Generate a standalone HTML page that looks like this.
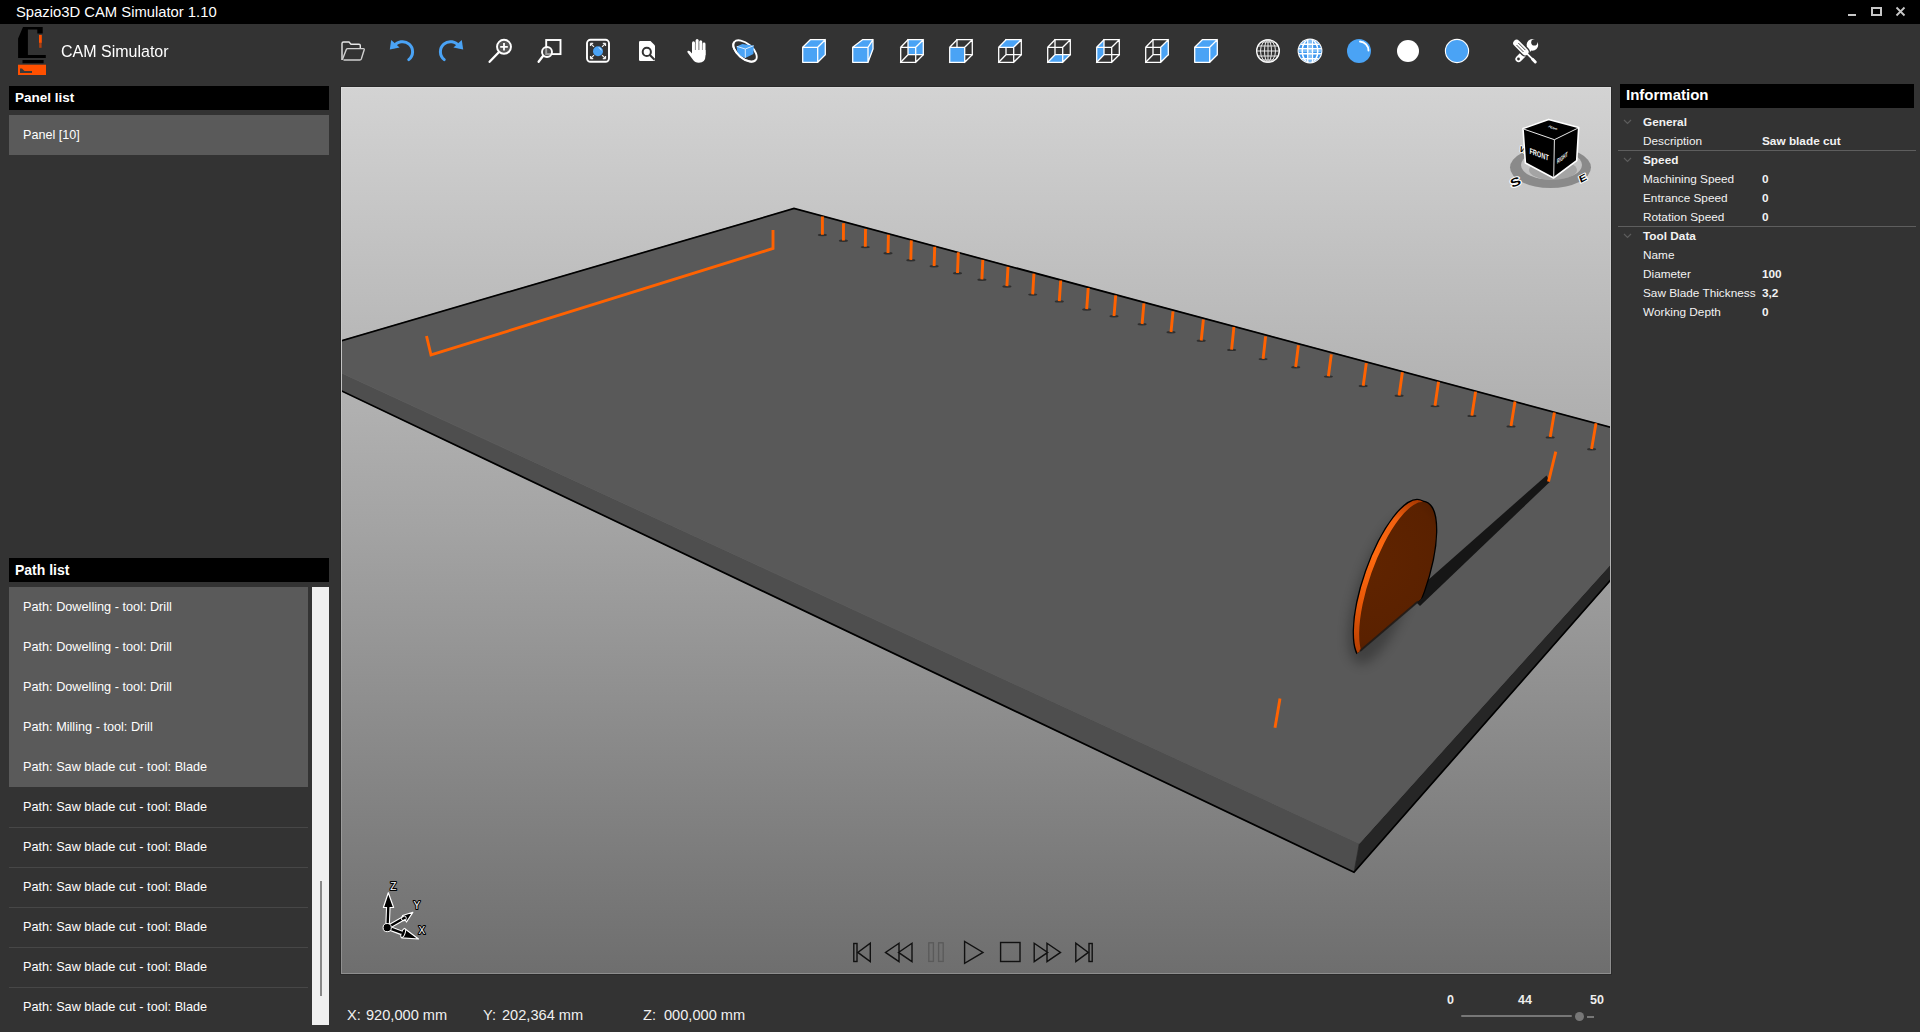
<!DOCTYPE html>
<html><head><meta charset="utf-8">
<style>
html,body{margin:0;padding:0;width:1920px;height:1032px;overflow:hidden;background:#333;font-family:"Liberation Sans",sans-serif;color:#fff}
.a{position:absolute}
#title{left:0;top:0;width:1920px;height:24px;background:#000}
#title .t{left:16px;top:3px;font-size:14.8px;line-height:18px;color:#fff;white-space:nowrap}
.hdr{background:#000;color:#fff;font-weight:bold;white-space:nowrap}
.item{background:#5a5a5a;font-size:12.6px;white-space:nowrap}
.pl{left:9px;width:299px;height:40px;font-size:12.7px;line-height:40px;white-space:nowrap;color:#fff}
.pl span{position:absolute;left:14px;top:0}
.sel{background:#5a5a5a}
.sep{border-top:1px solid #474747}
.info{font-size:11.8px;white-space:nowrap;color:#f2f2f2}
.info b{font-weight:bold}
.st{font-size:14.6px;white-space:nowrap;color:#f0f0f0}
</style></head><body>
<div id="title" class="a"><div class="t a">Spazio3D CAM Simulator 1.10</div>
</div>

<!-- logo -->
<svg class="a" style="left:0;top:24px" width="60" height="60" viewBox="0 24 60 60">
<polygon fill="#000" points="18.1,38.4 23,27 42.7,27 42.7,33.5 37.3,33.5 37.3,29.6 27.9,29.6 27.9,54.9 45.8,54.9 45.8,58 18.1,58"/>
<rect x="22.5" y="60" width="21.1" height="3.2" fill="#000"/>
<rect x="18" y="64.7" width="28" height="10.3" fill="#ff5000"/>
<rect x="39" y="34.9" width="2.8" height="8" fill="#ff5000"/>
<rect x="39.2" y="42.9" width="2.4" height="4.9" fill="#b04010"/>
<path d="M20 68.5 L22 68.5 L24.5 71 L32 71 L32 73 L20 73 Z" fill="#3a3a3a"/>
</svg>
<div class="a" style="left:61px;top:42px;font-size:16px;line-height:20px;color:#fff;white-space:nowrap;transform:scaleY(1.06);transform-origin:0 16px">CAM Simulator</div>


<!-- window controls -->
<svg class="a" style="left:1840px;top:0" width="80" height="24" viewBox="1840 0 80 24">
<rect x="1848" y="14" width="8" height="2" fill="#c8c8c8"/>
<rect x="1872" y="8" width="9" height="7" fill="none" stroke="#c8c8c8" stroke-width="2"/>
<path d="M1896.5 7.5L1904.5 15.5M1904.5 7.5L1896.5 15.5" stroke="#c8c8c8" stroke-width="1.8"/>
</svg>

<!-- toolbar -->
<svg class="a" style="left:330px;top:30px" width="1230" height="42" viewBox="330 30 1230 42">
<defs>
<radialGradient id="sph" cx="0.4" cy="0.4" r="0.6"><stop offset="0" stop-color="#5ab0ff"/><stop offset="1" stop-color="#3d95ea"/></radialGradient>
</defs>
<!-- folder -->
<path d="M342 60V43.5Q342 42 343.5 42H349L351 44.2H359Q360.3 44.2 360.3 45.5V48.5" fill="none" stroke="#e6e6e6" stroke-width="1.4"/>
<path d="M342.3 59.8L346.3 49.5Q346.7 48.6 347.7 48.6H363.3Q364.5 48.6 364.2 49.7L361.3 59Q360.9 60 359.8 60H343.5" fill="none" stroke="#d0d0d0" stroke-width="1.4"/>
<!-- undo -->
<path d="M393.94 46.70A10 10 0 1 1 408.76 59.58" fill="none" stroke="#4aa3f5" stroke-width="3" stroke-linecap="round"/>
<polygon points="389.8,49.4 391.2,40 399.6,47.4" fill="#4aa3f5"/>
<!-- redo -->
<path d="M459.06 46.70A10 10 0 1 0 444.24 59.58" fill="none" stroke="#4aa3f5" stroke-width="3" stroke-linecap="round"/>
<polygon points="463.2,49.4 461.8,40 453.4,47.4" fill="#4aa3f5"/>
<!-- zoom in -->
<circle cx="504" cy="46.8" r="7" fill="#555" stroke="#fff" stroke-width="1.9"/>
<path d="M504 43V50.6M500.2 46.8H507.8" stroke="#fff" stroke-width="1.8"/>
<path d="M498.8 52.2L489.6 61.8" stroke="#fff" stroke-width="2.3" stroke-linecap="round"/>
<!-- zoom window -->
<rect x="546.2" y="40" width="14.3" height="14.1" fill="none" stroke="#fff" stroke-width="1.9"/>
<circle cx="547" cy="52" r="5" fill="rgba(90,90,90,0.6)" stroke="#fff" stroke-width="1.9"/>
<path d="M543.2 55.8L538.6 61.8" stroke="#fff" stroke-width="2.3" stroke-linecap="round"/>
<!-- fit all -->
<rect x="587" y="39.8" width="22" height="22" rx="3.5" fill="none" stroke="#fff" stroke-width="1.9"/>
<circle cx="598" cy="51.2" r="5" fill="#4aa3f5"/>
<path d="M598.6 47.6A3.5 3.5 0 0 1 601.3 50.3" fill="none" stroke="#fff" stroke-width="0.8"/>
<path d="M590.5 43.3L594 46.8M590.5 43.3V46M590.5 43.3H593.2 M605.5 43.3L602 46.8M605.5 43.3V46M605.5 43.3H602.8 M590.5 58.7L594 55.2M590.5 58.7V56M590.5 58.7H593.2 M605.5 58.7L602 55.2M605.5 58.7V56M605.5 58.7H602.8" fill="none" stroke="#eee" stroke-width="1.2"/>
<!-- zoom object -->
<path d="M639 42.2Q639 41 640.2 41H650.5L655 45.5V59.8Q655 61 653.8 61H640.2Q639 61 639 59.8Z" fill="#fff"/>
<circle cx="646.8" cy="51.9" r="4.1" fill="none" stroke="#333" stroke-width="2"/>
<path d="M649.6 54.8L654.6 59.8" stroke="#333" stroke-width="2"/>
<!-- hand -->
<g fill="#fff">
<rect x="692" y="41.2" width="3" height="14" rx="1.5"/>
<rect x="695.6" y="39" width="3" height="14" rx="1.5"/>
<rect x="699.2" y="40.2" width="3" height="14" rx="1.5"/>
<rect x="702.6" y="42.6" width="2.9" height="13" rx="1.45"/>
<path d="M692 50H705.5V55.5Q705.5 62.8 698.8 62.8Q695 62.8 692.8 59.5L687.6 52.6Q686.8 51.2 688 50.8Q689.2 50.5 690.2 51.6L692 53.5Z"/>
</g>
<path d="M695.3 44V50M698.9 43V50M702.4 45V50" stroke="#a8a8a8" stroke-width="0.7"/>
<!-- orbit -->
<ellipse cx="745" cy="51" rx="14" ry="7.5" transform="rotate(40 745 51)" fill="none" stroke="#fff" stroke-width="1.9"/>
<polygon points="736.6,46.4 742.4,43.9 753.7,45.7 753.4,54 745.3,58 737.7,54.8" fill="#4aa3f5"/>
<path d="M736.8 46.4L745.3 49L753.6 45.7M745.3 49V57.8" fill="none" stroke="#d8ecff" stroke-width="1"/>
<path d="M755.72 60.00A14 7.5 40 0 1 734.28 42.00" fill="none" stroke="#fff" stroke-width="1.9"/>
<g transform="translate(802 39)"><polygon points="0.7,8.3 8.3,0.7 23.3,0.7 23.3,15.7 15.7,23.3 0.7,23.3" fill="#4aa3f5"/><path d="M0.7 8.3L8.3 0.7H23.3V15.7L15.7 23.3H0.7ZM0.7 8.3H15.7V23.3M15.7 8.3L23.3 0.7" fill="none" stroke="#fff" stroke-width="1.3" stroke-linejoin="round" stroke-linecap="square"/></g>
<g transform="translate(852 39)"><polygon points="0.7,8.3 10.5,0.7 21,0.7 21.2,10 16.3,23.3 0.7,23.3" fill="#4aa3f5"/><path d="M0.7 8.3L10.5 0.7H21V10L16 23.3H0.7ZM0.7 8.3H16V23.3M16 8.3L21 0.7" fill="none" stroke="#fff" stroke-width="1.3" stroke-linejoin="round" stroke-linecap="square"/></g>
<g transform="translate(900 39)"><polygon points="8,0.7 23.3,0.7 23.3,15.7 8,15.7" fill="#4aa3f5"/><path d="M8 0.7V15.7H23.3M0.7 23.3L8 15.7" fill="none" stroke="#fff" stroke-width="1.3" stroke-linejoin="round" stroke-linecap="square"/><path d="M0.7 8.3H15.7V23.3H0.7ZM8 0.7H23.3V15.7M0.7 8.3L8 0.7M15.7 8.3L23.3 0.7M15.7 23.3L23.3 15.7" fill="none" stroke="#fff" stroke-width="1.3" stroke-linejoin="round" stroke-linecap="square"/></g>
<g transform="translate(949 39)"><path d="M8 0.7V15.7H23.3M0.7 23.3L8 15.7" fill="none" stroke="#fff" stroke-width="1.3" stroke-linejoin="round" stroke-linecap="square"/><polygon points="0.7,8.3 15.7,8.3 15.7,23.3 0.7,23.3" fill="#4aa3f5"/><path d="M0.7 8.3H15.7V23.3H0.7ZM8 0.7H23.3V15.7M0.7 8.3L8 0.7M15.7 8.3L23.3 0.7M15.7 23.3L23.3 15.7" fill="none" stroke="#fff" stroke-width="1.3" stroke-linejoin="round" stroke-linecap="square"/></g>
<g transform="translate(998 39)"><path d="M8 0.7V15.7H23.3M0.7 23.3L8 15.7" fill="none" stroke="#fff" stroke-width="1.3" stroke-linejoin="round" stroke-linecap="square"/><polygon points="0.7,8.3 8,0.7 23.3,0.7 15.7,8.3" fill="#4aa3f5"/><path d="M0.7 8.3H15.7V23.3H0.7ZM8 0.7H23.3V15.7M0.7 8.3L8 0.7M15.7 8.3L23.3 0.7M15.7 23.3L23.3 15.7" fill="none" stroke="#fff" stroke-width="1.3" stroke-linejoin="round" stroke-linecap="square"/></g>
<g transform="translate(1047 39)"><polygon points="0.7,23.3 8,15.7 23.3,15.7 15.7,23.3" fill="#4aa3f5"/><path d="M8 0.7V15.7H23.3M0.7 23.3L8 15.7" fill="none" stroke="#fff" stroke-width="1.3" stroke-linejoin="round" stroke-linecap="square"/><path d="M0.7 8.3H15.7V23.3H0.7ZM8 0.7H23.3V15.7M0.7 8.3L8 0.7M15.7 8.3L23.3 0.7M15.7 23.3L23.3 15.7" fill="none" stroke="#fff" stroke-width="1.3" stroke-linejoin="round" stroke-linecap="square"/></g>
<g transform="translate(1096 39)"><polygon points="0.7,8.3 8,0.7 8,15.7 0.7,23.3" fill="#4aa3f5"/><path d="M8 0.7V15.7H23.3M0.7 23.3L8 15.7" fill="none" stroke="#fff" stroke-width="1.3" stroke-linejoin="round" stroke-linecap="square"/><path d="M0.7 8.3H15.7V23.3H0.7ZM8 0.7H23.3V15.7M0.7 8.3L8 0.7M15.7 8.3L23.3 0.7M15.7 23.3L23.3 15.7" fill="none" stroke="#fff" stroke-width="1.3" stroke-linejoin="round" stroke-linecap="square"/></g>
<g transform="translate(1145 39)"><path d="M8 0.7V15.7H23.3M0.7 23.3L8 15.7" fill="none" stroke="#fff" stroke-width="1.3" stroke-linejoin="round" stroke-linecap="square"/><polygon points="15.7,8.3 23.3,0.7 23.3,15.7 15.7,23.3" fill="#4aa3f5"/><path d="M0.7 8.3H15.7V23.3H0.7ZM8 0.7H23.3V15.7M0.7 8.3L8 0.7M15.7 8.3L23.3 0.7M15.7 23.3L23.3 15.7" fill="none" stroke="#fff" stroke-width="1.3" stroke-linejoin="round" stroke-linecap="square"/></g>
<g transform="translate(1194 39)"><polygon points="0.7,8.3 8.3,0.7 23.3,0.7 23.3,15.7 15.7,23.3 0.7,23.3" fill="#4aa3f5"/><path d="M0.7 8.3L8.3 0.7H23.3V15.7L15.7 23.3H0.7ZM0.7 8.3H15.7V23.3M15.7 8.3L23.3 0.7" fill="none" stroke="#fff" stroke-width="1.3" stroke-linejoin="round" stroke-linecap="square"/></g>
<!-- globe wire -->
<g transform="translate(1268 51)">
<circle r="11.3" fill="none" stroke="#fff" stroke-width="1.4"/>
<ellipse rx="7.5" ry="11.3" fill="none" stroke="#e8e8e8" stroke-width="1"/>
<ellipse rx="3.5" ry="11.3" fill="none" stroke="#e8e8e8" stroke-width="1"/>
<path d="M0 -11.3V11.3M-11.3 0H11.3M-10.2 -5H10.2M-10.2 5H10.2M-7 -9H7M-7 9H7" stroke="#e8e8e8" stroke-width="1"/>
</g>
<!-- globe blue -->
<g transform="translate(1310 51)">
<circle r="12.4" fill="#fff"/>
<clipPath id="gc"><circle r="11.3"/></clipPath>
<g clip-path="url(#gc)">
<rect x="-12" y="-12" width="24" height="24" fill="#3d96ee"/>
<path d="M-12 0H12M0 -12V12" stroke="#7fbff7" stroke-width="2.2"/>
<path d="M-12 -6.8H12M-12 -2.2H12M-12 2.8H12M-12 7.8H12" stroke="#fff" stroke-width="1.5"/>
<ellipse rx="7.8" ry="12" fill="none" stroke="#fff" stroke-width="1.5"/>
<path d="M-2.2 -12V12M2.4 -12V12" stroke="#fff" stroke-width="1.5"/>
</g>
</g>
<!-- blue sphere -->
<circle cx="1359" cy="51" r="12" fill="#4aa3f5"/>
<path d="M1360 41.5A9 9 0 0 1 1368.5 50.5" fill="none" stroke="#fff" stroke-width="1.9" stroke-linecap="round"/>
<!-- white circle -->
<circle cx="1408" cy="51" r="11" fill="#fff"/>
<!-- blue circle -->
<circle cx="1457" cy="51" r="11.6" fill="#4aa3f5" stroke="#fff" stroke-width="1.1"/>
<!-- tools -->
<mask id="wm"><rect x="1500" y="30" width="60" height="40" fill="#fff"/><circle cx="1534.3" cy="42.4" r="3.1" fill="#000"/><polygon points="1534.3,39.3 1540,34 1542,40 1537.4,42.6" fill="#000"/></mask>
<g mask="url(#wm)">
<circle cx="1532.4" cy="44.9" r="5.8" fill="#fff"/>
</g>
<path d="M1528 49.5L1518.6 58.9" stroke="#fff" stroke-width="6.4" stroke-linecap="round"/>
<circle cx="1518.5" cy="59" r="1.4" fill="#333"/>
<path d="M1516.6 43.2L1525.2 51.8" stroke="#333" stroke-width="9.6" stroke-linecap="round"/>
<path d="M1516.6 43.2L1525.2 51.8" stroke="#fff" stroke-width="6.8" stroke-linecap="round"/>
<path d="M1518.3 43L1525.4 50.1M1516.5 45L1523.5 52" stroke="#333" stroke-width="0.9"/>
<path d="M1526.5 53.2L1533 59.7" stroke="#fff" stroke-width="1.7"/>
<path d="M1532.6 59.3L1535.3 62" stroke="#fff" stroke-width="2.9" stroke-linecap="round"/>
</svg>

<!-- Panel list -->
<div class="a hdr" style="left:9px;top:86px;width:320px;height:24px;font-size:13.5px;line-height:24px"><span class="a" style="left:6px;top:0">Panel list</span></div>
<div class="a item" style="left:9px;top:115px;width:320px;height:40px;line-height:40px"><span class="a" style="left:14px;top:0">Panel [10]</span></div>

<!-- Path list -->
<div class="a hdr" style="left:9px;top:558px;width:320px;height:24px;font-size:14px;line-height:24px"><span class="a" style="left:6px;top:0">Path list</span></div>
<div class="a pl sel" style="top:587px"><span>Path: Dowelling - tool: Drill</span></div>
<div class="a pl sel" style="top:627px"><span>Path: Dowelling - tool: Drill</span></div>
<div class="a pl sel" style="top:667px"><span>Path: Dowelling - tool: Drill</span></div>
<div class="a pl sel" style="top:707px"><span>Path: Milling - tool: Drill</span></div>
<div class="a pl sel" style="top:747px"><span>Path: Saw blade cut - tool: Blade</span></div>
<div class="a pl" style="top:787px"><span>Path: Saw blade cut - tool: Blade</span></div>
<div class="a pl sep" style="top:827px;height:39px"><span style="top:-1px">Path: Saw blade cut - tool: Blade</span></div>
<div class="a pl sep" style="top:867px;height:39px"><span style="top:-1px">Path: Saw blade cut - tool: Blade</span></div>
<div class="a pl sep" style="top:907px;height:39px"><span style="top:-1px">Path: Saw blade cut - tool: Blade</span></div>
<div class="a pl sep" style="top:947px;height:39px"><span style="top:-1px">Path: Saw blade cut - tool: Blade</span></div>
<div class="a pl sep" style="top:987px;height:38px"><span style="top:-1px">Path: Saw blade cut - tool: Blade</span></div>
<div class="a" style="left:312px;top:587px;width:17px;height:438px;background:#f0f0f0"></div>
<div class="a" style="left:320px;top:881px;width:2px;height:115px;background:#888"></div>

<!-- Info panel -->
<div class="a hdr" style="left:1620px;top:84px;width:294px;height:24px;font-size:15px;line-height:22px"><span class="a" style="left:6px;top:0">Information</span></div>


<!-- viewport -->
<div class="a" style="left:340px;top:86px;width:1272px;height:889px;background:#2a2a2a"></div>
<div class="a" style="left:341px;top:87px;width:1270px;height:887px;background:linear-gradient(#dcdcdc,#8e8e8e)"></div>
<svg class="a" style="left:0;top:0" width="1920" height="1032" viewBox="0 0 1920 1032">
<defs>
<clipPath id="vp"><rect x="342" y="88" width="1268" height="885"/></clipPath>
<linearGradient id="bg" x1="0" y1="87" x2="0" y2="974" gradientUnits="userSpaceOnUse">
<stop offset="0" stop-color="#d3d3d3"/><stop offset="0.5" stop-color="#a3a3a3"/><stop offset="1" stop-color="#6e6e6e"/>
</linearGradient>
<radialGradient id="blade" cx="1405" cy="545" r="110" gradientUnits="userSpaceOnUse">
<stop offset="0" stop-color="#602400"/><stop offset="0.7" stop-color="#5a2100"/><stop offset="1" stop-color="#461800"/>
</radialGradient>
<linearGradient id="rim" x1="1307.8" y1="580.4" x2="1477.0" y2="580.4" gradientUnits="userSpaceOnUse"><stop offset="0" stop-color="#b03c00"/><stop offset="0.3" stop-color="#e85808"/><stop offset="0.6" stop-color="#ff6a10"/><stop offset="0.85" stop-color="#f06010"/><stop offset="1" stop-color="#a83800"/></linearGradient>
<clipPath id="cutc"><polygon points="1300,380 1520,380 1520,514.4 1300,702.2"/></clipPath>
<filter id="blur2" x="-50%" y="-50%" width="200%" height="200%"><feGaussianBlur stdDeviation="6"/></filter>
</defs>
<g clip-path="url(#vp)">
<rect x="342" y="88" width="1268" height="885" fill="url(#bg)"/>
<polygon points="298.7,353.2 1359.3,843.4 1354,872.2 290,366.4" fill="#4e4e4e" stroke="#4e4e4e" stroke-width="0.6"/>
<polygon points="1359.3,843.4 1710,454 1700,478.4 1354,872.2" fill="#262626" stroke="#262626" stroke-width="0.6"/>
<polygon points="298.7,353.2 794,208.5 1710,454 1359.3,843.4" fill="#595959" stroke="#595959" stroke-width="0.8"/>
<polyline points="298.7,353.2 794,208.5 1710,454" fill="none" stroke="#000" stroke-width="1.7"/>
<polyline points="290,366.4 1354,872.2 1700,478.4" fill="none" stroke="#000" stroke-width="1.7"/>
<g fill="#1e1e1e" opacity="0.7"><ellipse cx="822.4" cy="235.0" rx="4.6" ry="1.2" /><ellipse cx="843.4" cy="240.7" rx="4.6" ry="1.2" /><ellipse cx="865.3" cy="247.1" rx="4.6" ry="1.2" /><ellipse cx="888.0" cy="253.3" rx="4.6" ry="1.2" /><ellipse cx="910.8" cy="260.2" rx="4.6" ry="1.2" /><ellipse cx="934.1" cy="266.3" rx="4.6" ry="1.2" /><ellipse cx="957.5" cy="273.3" rx="4.6" ry="1.2" /><ellipse cx="981.9" cy="279.7" rx="4.6" ry="1.2" /><ellipse cx="1006.9" cy="286.5" rx="4.6" ry="1.2" /><ellipse cx="1032.7" cy="294.6" rx="4.6" ry="1.2" /><ellipse cx="1059.3" cy="301.4" rx="4.6" ry="1.2" /><ellipse cx="1086.7" cy="309.5" rx="4.6" ry="1.2" /><ellipse cx="1114.0" cy="316.3" rx="4.6" ry="1.2" /><ellipse cx="1142.1" cy="324.3" rx="4.6" ry="1.2" /><ellipse cx="1171.0" cy="332.3" rx="4.6" ry="1.2" /><ellipse cx="1201.2" cy="340.8" rx="4.6" ry="1.2" /><ellipse cx="1231.6" cy="349.9" rx="4.6" ry="1.2" /><ellipse cx="1263.1" cy="359.1" rx="4.6" ry="1.2" /><ellipse cx="1295.7" cy="367.3" rx="4.6" ry="1.2" /><ellipse cx="1328.4" cy="376.6" rx="4.6" ry="1.2" /><ellipse cx="1363.2" cy="386.0" rx="4.6" ry="1.2" /><ellipse cx="1399.1" cy="395.8" rx="4.6" ry="1.2" /><ellipse cx="1435.0" cy="406.1" rx="4.6" ry="1.2" /><ellipse cx="1471.9" cy="415.9" rx="4.6" ry="1.2" /><ellipse cx="1511.0" cy="426.4" rx="4.6" ry="1.2" /><ellipse cx="1550.2" cy="437.4" rx="4.6" ry="1.2" /><ellipse cx="1591.6" cy="449.2" rx="4.6" ry="1.2" /></g>
<path d="M822.4 216.4L822.4 234.7M843.5 223.2L843.4 240.4M865.5 229.0L865.3 246.8M888.4 234.7L888.0 253.0M911.3 240.4L910.8 259.9M934.7 246.8L934.1 266.0M958.3 252.3L957.5 273.0M982.8 259.9L981.9 279.4M1008.0 266.8L1006.9 286.2M1033.9 273.6L1032.7 294.3M1060.7 280.5L1059.3 301.1M1088.2 288.0L1086.7 309.2M1115.7 295.4L1114.0 316.0M1143.9 303.4L1142.1 324.0M1173.0 311.4L1171.0 332.0M1203.4 319.5L1201.2 340.5M1233.9 327.0L1231.6 349.6M1265.6 336.4L1263.1 358.8M1298.4 345.2L1295.7 367.0M1331.3 354.4L1328.4 376.3M1366.3 363.1L1363.2 385.7M1402.4 372.3L1399.1 395.5M1438.5 381.7L1435.0 405.8M1475.6 391.6L1471.9 415.6M1515.0 401.4L1511.0 426.1M1554.4 412.4L1550.2 437.1M1596.0 423.3L1591.6 448.9" stroke="#ff6200" stroke-width="2.9" fill="none"/>
<path d="M426.5 336L431 355L773 248.5L773 230" stroke="#ff6200" stroke-width="2.9" fill="none"/>
<path d="M1280 698.4L1275 727.7" stroke="#ff6200" stroke-width="2.9"/>
<polygon points="1546.5,475.4 1550,481.7 1420,606 1410,596" fill="#161616"/>
<path d="M1555.8 451.6L1548.5 481.7" stroke="#ff6200" stroke-width="2.9"/>
<ellipse cx="1384" cy="590" rx="78" ry="26" transform="rotate(-70.6 1384 590)" fill="#000" opacity="0.28" filter="url(#blur2)"/>
<g clip-path="url(#cutc)">
<ellipse cx="1392.4" cy="580.4" rx="84.6" ry="27.8" transform="rotate(-70.6 1392.4 580.4)" fill="#000" stroke="#000" stroke-width="2.6"/>
<ellipse cx="1397.6" cy="582.2" rx="84.6" ry="27.8" transform="rotate(-70.6 1397.6 582.2)" fill="#000" stroke="#000" stroke-width="2.6"/>
<ellipse cx="1392.4" cy="580.4" rx="84.6" ry="27.8" transform="rotate(-70.6 1392.4 580.4)" fill="url(#rim)"/>
<ellipse cx="1397.6" cy="582.2" rx="84.6" ry="27.8" transform="rotate(-70.6 1397.6 582.2)" fill="url(#blade)"/>
</g>
<path d="M1360 651L1418 601.5" stroke="#1a1a1a" stroke-width="2" opacity="0.8"/>
</g>
</svg>


<!-- info rows -->
<svg class="a" style="left:1618px;top:110px" width="300" height="215" viewBox="1618 110 300 215">
<path d="M1624 120L1627.5 123.5L1631 120M1624 158L1627.5 161.5L1631 158M1624 234L1627.5 237.5L1631 234" fill="none" stroke="#5c5c5c" stroke-width="1.2"/>
<rect x="1618" y="150" width="298" height="1" fill="#5e5e5e"/>
<rect x="1618" y="226" width="298" height="1" fill="#5e5e5e"/>
</svg>
<div class="a info" style="left:1643px;top:114px;line-height:16px"><b>General</b></div>
<div class="a info" style="left:1643px;top:133px;line-height:16px">Description</div>
<div class="a info" style="left:1762px;top:133px;line-height:16px"><b>Saw blade cut</b></div>
<div class="a info" style="left:1643px;top:152px;line-height:16px"><b>Speed</b></div>
<div class="a info" style="left:1643px;top:171px;line-height:16px">Machining Speed</div>
<div class="a info" style="left:1762px;top:171px;line-height:16px"><b>0</b></div>
<div class="a info" style="left:1643px;top:190px;line-height:16px">Entrance Speed</div>
<div class="a info" style="left:1762px;top:190px;line-height:16px"><b>0</b></div>
<div class="a info" style="left:1643px;top:209px;line-height:16px">Rotation Speed</div>
<div class="a info" style="left:1762px;top:209px;line-height:16px"><b>0</b></div>
<div class="a info" style="left:1643px;top:228px;line-height:16px"><b>Tool Data</b></div>
<div class="a info" style="left:1643px;top:247px;line-height:16px">Name</div>
<div class="a info" style="left:1643px;top:266px;line-height:16px">Diameter</div>
<div class="a info" style="left:1762px;top:266px;line-height:16px"><b>100</b></div>
<div class="a info" style="left:1643px;top:285px;line-height:16px">Saw Blade Thickness</div>
<div class="a info" style="left:1762px;top:285px;line-height:16px"><b>3,2</b></div>
<div class="a info" style="left:1643px;top:304px;line-height:16px">Working Depth</div>
<div class="a info" style="left:1762px;top:304px;line-height:16px"><b>0</b></div>


<!-- viewport overlays -->
<svg class="a" style="left:340px;top:860px" width="800" height="120" viewBox="340 860 800 120">
<!-- axis -->
<g stroke-linejoin="round">
<path d="M387.5 927.5L388.3 907M387.5 927.5L405 917.5M387.5 927.5L403 933.5" stroke="#fff" stroke-width="4.6"/>
<polygon points="388.3,892.7 383.4,907.5 393.6,907.5" fill="#000" stroke="#fff" stroke-width="1.2"/>
<polygon points="412.8,912.3 402.5,915.5 406.5,922" fill="#000" stroke="#fff" stroke-width="1.2"/>
<polygon points="418.5,939 404.5,928.5 401.8,937.8" fill="#000" stroke="#fff" stroke-width="1.2"/><ellipse cx="403.2" cy="933.2" rx="1.8" ry="4.6" transform="rotate(20 403.2 933.2)" fill="#000" stroke="#fff" stroke-width="1"/>
<path d="M387.5 927.5L388.3 907M387.5 927.5L405 917.5M387.5 927.5L402 932.8" stroke="#000" stroke-width="2.4"/>
<circle cx="403.8" cy="918.3" r="2.5" fill="none" stroke="#fff" stroke-width="1"/>
<circle cx="387.2" cy="927.6" r="4.1" fill="#000" stroke="#fff" stroke-width="1"/>
</g>
<g font-family="Liberation Sans" font-size="10px" fill="#fff" stroke="#000" stroke-width="2.2" paint-order="stroke" stroke-linejoin="round">
<text x="390.3" y="890">Z</text><text x="413.5" y="909.3">Y</text><text x="418.5" y="934">X</text>
</g>
<!-- playback -->
<g fill="none" stroke="#111" stroke-width="1.4" stroke-linejoin="miter">
<rect x="853.8" y="943.5" width="3.2" height="18"/>
<path d="M870.3 943.2V961.6L857.8 952.4Z"/>
<path d="M899 943.2V961.6L885.5 952.4Z M912 943.2V961.6L898.5 952.4Z"/>
<path d="M964.6 941.5V963.3L983 952.4Z"/>
<rect x="1000.6" y="942.5" width="19.4" height="19"/>
<path d="M1034.2 943.2V961.6L1047.7 952.4Z M1047 943.2V961.6L1060.5 952.4Z"/>
<path d="M1075.8 943.2V961.6L1088.3 952.4Z"/>
<rect x="1089" y="943.5" width="3.2" height="18"/>
</g>
<g fill="none" stroke="#5a5a5a" stroke-width="1.3">
<rect x="928.8" y="942.8" width="4.6" height="18.6"/>
<rect x="938.6" y="942.8" width="4.6" height="18.6"/>
</g>
</svg>

<!-- gizmo -->
<svg class="a" style="left:1495px;top:105px" width="110" height="95" viewBox="1495 105 110 95">
<ellipse cx="1550.5" cy="167.5" rx="40.5" ry="20.5" fill="#8a8a8a"/>
<ellipse cx="1551.5" cy="165" rx="30.5" ry="15" fill="#c2c2c2"/>
<ellipse cx="1553" cy="170" rx="24" ry="10" fill="#909090" opacity="0.6"/>
<g font-family="Liberation Sans" font-weight="bold" fill="#000" stroke="#fff" stroke-width="1.8" paint-order="stroke" stroke-linejoin="round">
<text x="0" y="0" font-size="9px" transform="matrix(0.9 0.4 -0.3 0.8 1519 151)">W</text>
</g>
<polygon points="1548.6,119.4 1578.7,127.6 1576.7,160.6 1553.5,178 1525.4,163 1523,128.6" fill="#000" stroke="#fff" stroke-width="1.6" stroke-linejoin="round"/>
<path d="M1523.5 129L1554.4 139.7L1578.2 128M1554.4 139.7L1553.7 177.5" fill="none" stroke="#e8e8e8" stroke-width="1"/>
<g font-family="Liberation Sans" font-weight="bold" fill="#fff">
<text x="0" y="0" font-size="6.5px" transform="matrix(0.85 0.33 -0.05 1.25 1529.5 153.5)">FRONT</text>
<text x="0" y="0" font-size="5.5px" transform="matrix(0.62 -0.45 0 1.25 1557 164)">RIGHT</text>
<text x="0" y="0" font-size="5px" transform="matrix(0.8 0.35 -0.8 0.3 1547 126.5)">TOP</text>
</g>
<g font-family="Liberation Sans" font-weight="bold" fill="#000" stroke="#fff" stroke-width="2.2" paint-order="stroke" stroke-linejoin="round">
<text x="0" y="0" font-size="14px" transform="matrix(1.05 -0.45 0.3 0.8 1512 188)">S</text>
<text x="0" y="0" font-size="11px" transform="matrix(0.95 -0.5 0.3 0.8 1580.5 183)">E</text>
</g>
</svg>

<!-- slider -->
<div class="a" style="left:1447px;top:993px;font-size:12.5px;font-weight:bold;color:#eee">0</div>
<div class="a" style="left:1518px;top:993px;font-size:12.5px;font-weight:bold;color:#eee">44</div>
<div class="a" style="left:1590px;top:993px;font-size:12.5px;font-weight:bold;color:#eee">50</div>
<div class="a" style="left:1461px;top:1015px;width:111px;height:2px;background:#777;border-radius:1px"></div>
<div class="a" style="left:1574.5px;top:1011.5px;width:9px;height:9px;background:#777;border-radius:50%"></div>
<div class="a" style="left:1586.5px;top:1015.5px;width:7px;height:2px;background:#777"></div>

<!-- status -->
<div class="a st" style="left:347px;top:1007px">X:</div>
<div class="a st" style="left:366px;top:1007px">920,000 mm</div>
<div class="a st" style="left:483px;top:1007px">Y:</div>
<div class="a st" style="left:502px;top:1007px">202,364 mm</div>
<div class="a st" style="left:643px;top:1007px">Z:</div>
<div class="a st" style="left:664px;top:1007px">000,000 mm</div>

</body></html>
